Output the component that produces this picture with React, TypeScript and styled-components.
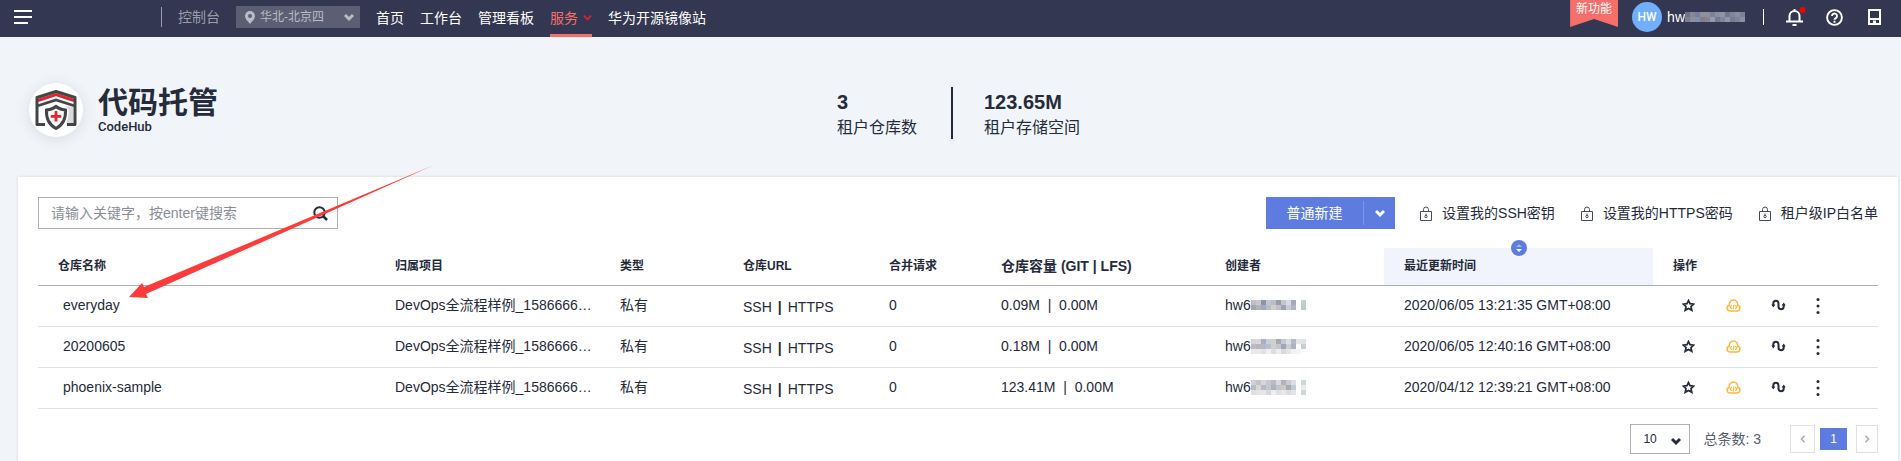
import React from "react";
import styled, { createGlobalStyle } from "styled-components";

const sans = `"Liberation Sans", "Noto Sans CJK SC", sans-serif`;

const Global = createGlobalStyle`
  *, *::before, *::after { box-sizing: border-box; }
  body { margin: 0; background: #f1f5f9; color: #252b3a; font: 14px/20px ${sans}; }
  button, input, select { font: inherit; color: inherit; margin: 0; padding: 0; border: 0; background: none; border-radius: 0; }
  a { color: inherit; text-decoration: none; }
  svg { display: block; flex: none; }
`;

const Page = styled.div`
  position: relative;
  min-height: 100vh;
  display: flex;
  flex-direction: column;
`;

/* top bar */
const TopBar = styled.header`
  height: 37px;
  flex: none;
  display: flex;
  align-items: stretch;
  background: #343751;
  color: #fff;
  padding: 0 20px 0 14px;
`;
const IconButton = styled.button`
  display: flex;
  align-items: center;
  padding-bottom: 3px;
`;
const Console = styled.div`
  display: flex;
  align-items: center;
  gap: 16px;
  margin-left: 129px;
  padding-bottom: 3px;
  color: #9b9dab;
`;
const Rule = styled.span<{ $h: number; $c: string; $w?: number }>`
  width: ${(p) => p.$w ?? 1}px;
  height: ${(p) => p.$h}px;
  background: ${(p) => p.$c};
`;
const Region = styled.button`
  width: 124px;
  height: 22px;
  display: flex;
  align-items: center;
  gap: 5px;
  padding: 0 6px 0 9px;
  background: #5c5f74;
  color: #b9bbc5;
  font-size: 12px;
  span { flex: 1; text-align: left; }
`;
const Nav = styled.nav`
  display: flex;
  gap: 16px;
  margin-left: 16px;
`;
const NavLink = styled.a<{ $active?: boolean }>`
  display: flex;
  align-items: center;
  gap: 5px;
  padding: ${(p) => (p.$active ? "1px 0 0" : "0 0 2px")};
  border-bottom: ${(p) => (p.$active ? "3px solid #f66f6a" : "0")};
  color: ${(p) => (p.$active ? "#f66f6a" : "#fff")};
`;
const Account = styled.div`
  margin-left: auto;
  display: flex;
  align-items: center;
  padding-bottom: 3px;
`;
const Ribbon = styled.a`
  align-self: flex-start;
  width: 48px;
  height: 27px;
  text-align: center;
  font-size: 12px;
  line-height: 18px;
  background: #f66f6a;
  clip-path: polygon(0 0, 100% 0, 100% 100%, 50% 19px, 0 100%);
`;
const Avatar = styled.span`
  width: 30px;
  height: 30px;
  margin: 0 5px 0 14px;
  border-radius: 50%;
  background: #71aefc;
  font: 500 12px/30px Roboto, sans-serif;
  text-align: center;
`;
const User = styled.span`
  display: flex;
  align-items: center;
  margin-right: 18px;
`;
const Tools = styled.div`
  display: flex;
  gap: 20px;
  margin-left: 22px;
  ${IconButton} { padding: 0; }
`;

/* service heading */
const Hero = styled.section`
  display: grid;
  grid-template-columns: 808px 1fr;
  height: 140px;
  padding: 50px 29px 0;
`;
const Brand = styled.div`
  display: flex;
  gap: 15px;
`;
const Logo = styled.span`
  display: grid;
  place-items: center;
  width: 54px;
  height: 54px;
  margin-top: -4px;
  border-radius: 50%;
  background: #fff;
  box-shadow: 0 2px 14px rgba(37, 43, 58, 0.12);
`;
const Title = styled.h1`
  margin: 0;
  font-size: 30px;
  line-height: 32px;
  font-weight: 700;
`;
const Subtitle = styled.div`
  font: 500 13px/16px Roboto, sans-serif;
`;
const Stats = styled.div`
  display: flex;
  align-items: flex-start;
  gap: 31px;
`;
const Stat = styled.div`
  padding-top: 3px;
  font-size: 16px;
  line-height: 28px;
  min-width: 83px;
  strong { display: block; font-size: 20px; line-height: 24px; }
`;

/* repository panel */
const Panel = styled.main`
  flex: 1;
  margin: 0 3px 0 18px;
  padding: 20px 20px 0;
  background: #fff;
  box-shadow: 0 0 3px rgba(37, 43, 58, 0.12);
`;
const Toolbar = styled.div`
  display: flex;
  align-items: center;
  height: 32px;
`;
const Search = styled.label`
  display: flex;
  align-items: center;
  width: 300px;
  height: 32px;
  padding: 0 9px 0 12px;
  border: 1px solid #adb0b8;
  input { flex: 1; min-width: 0; outline: 0; }
  input::placeholder { color: #8a8e99; opacity: 1; }
`;
const Split = styled.div`
  display: flex;
  align-items: center;
  width: 129px;
  height: 32px;
  margin-left: auto;
  background: #5e7ce0;
  color: #fff;
`;
const SplitMain = styled.button`
  flex: 1;
  height: 24px;
  border-right: 1px solid #7c95ea;
`;
const SplitMore = styled.button`
  display: grid;
  place-items: center;
  width: 31px;
  height: 32px;
`;
const Links = styled.div`
  display: flex;
  gap: 25px;
  margin-left: 24px;
`;
const LockLink = styled.a`
  display: flex;
  align-items: center;
  gap: 9px;
`;

const Table = styled.table`
  width: 100%;
  margin-top: 19px;
  table-layout: fixed;
  border-collapse: separate;
  border-spacing: 0;
`;
const Th = styled.th<{ $large?: boolean; $sorted?: boolean }>`
  position: relative;
  height: 38px;
  padding: 0 20px 2px;
  text-align: left;
  font-size: ${(p) => (p.$large ? 14 : 12)}px;
  font-weight: 700;
  white-space: nowrap;
  background: ${(p) => (p.$sorted ? "#f1f4fd" : "none")};
  border-bottom: 1px solid #adb0b8;
`;
const SortBadge = styled.button`
  position: absolute;
  top: -8px;
  left: calc(50% - 8px);
  width: 16px;
  height: 16px;
  border-radius: 50%;
  background: #5e7ce0;
  display: grid;
  place-items: center;
`;
const Td = styled.td<{ $name?: boolean; $low?: boolean }>`
  height: 41px;
  padding: ${(p) => (p.$low ? "2px 0 0" : "0 0 2px")};
  padding-left: ${(p) => (p.$name ? 25 : 20)}px;
  white-space: pre;
  border-bottom: 1px solid #dfe1e6;
`;
const Urls = styled.div`
  display: flex;
  gap: 6px;
`;
const Creator = styled.span`
  display: flex;
  align-items: center;
`;
const Actions = styled.div`
  display: flex;
  padding-left: 7px;
  gap: 29px;
  align-items: center;
`;
const Action = styled.button<{ $narrow?: boolean }>`
  display: grid;
  place-items: center;
  width: ${(p) => (p.$narrow ? 6 : 16)}px;
  height: 18px;
`;

const Pager = styled.footer`
  display: flex;
  align-items: center;
  justify-content: flex-end;
  margin-top: 15px;
  color: #575d6c;
`;
const SizeBox = styled.span`
  position: relative;
  display: flex;
  select {
    appearance: none;
    width: 60px;
    height: 30px;
    padding: 0 24px 0 12px;
    border: 1px solid #adb0b8;
    font-size: 12px;
    color: #252b3a;
  }
  svg { position: absolute; right: 9px; top: 12px; pointer-events: none; }
`;
const Total = styled.span`
  margin: 0 29px 0 13px;
`;
const PageButton = styled.button<{ $w: number; $current?: boolean }>`
  display: grid;
  place-items: center;
  width: ${(p) => p.$w}px;
  height: ${(p) => (p.$current ? 22 : 28)}px;
  border: ${(p) => (p.$current ? "0" : "1px solid #dfe1e6")};
  background: ${(p) => (p.$current ? "#5e7ce0" : "#fff")};
  color: #fff;
  font-size: 12px;
`;
const Pages = styled.div`
  display: flex;
  align-items: center;
  ${PageButton}:first-child { margin-right: 5px; }
  ${PageButton}:last-child { margin-left: 9px; }
`;
const Pointer = styled.svg`
  position: absolute;
  left: 129px;
  top: 164px;
  pointer-events: none;
`;

const Chevron = ({ c, dir = 0, w = 10, s = 2 }: { c: string; dir?: number; w?: number; s?: number }) => (
  <svg width={w} height={w} viewBox="0 0 10 10" fill="none" stroke={c} strokeWidth={s}>
    <path d="M1 3l4 4 4-4" transform={`rotate(${dir} 5 5)`} />
  </svg>
);

/* masked part of an account name, drawn as 5px tiles */
const Mosaic = ({ rows, h }: { rows: string[][]; h: number }) => (
  <svg width={rows[0].length * 5} height={h} shapeRendering="crispEdges" aria-hidden="true">
    {rows.map((r, y) => r.map((c, x) => <rect key={`${x}-${y}`} x={x * 5} y={y * 5} width="5" height="5" fill={c} />))}
  </svg>
);
const topMask = [
  ["#6d7189", "#85889c", "#77809b", "#8f8f9f", "#918f99", "#7c8199", "#8a8fa5", "#9194a4", "#74788e", "#81859b", "#8b8e9e", "#7a7f99"],
  ["#797e96", "#8e8d9e", "#868ea6", "#7e7d91", "#8b8189", "#939bae", "#74798f", "#858397", "#8e96ab", "#777b91", "#7f8399", "#8c90a5"],
];
const rowMasks = [
  [
    ["#c1bec5", "#c9cad0", "#8f93ab", "#c4c7d0", "#b9bdc8", "#9b9da3", "#c5c6cc", "#d8dce2", "#a6aabb", "#ffffff", "#c3cfd0"],
    ["#a5a8b4", "#b8b2b5", "#a4a9bb", "#b6bcc8", "#d2cecb", "#c1c2c9", "#9ca2b7", "#c9cdd1", "#b0b6c2", "#ffffff", "#bdcaca"],
  ],
  [
    ["#d7d5da", "#d9d6d8", "#a9adbf", "#cbced4", "#c9d0d6", "#aaa8ab", "#c2c5d2", "#dadce0", "#b5b8c4", "#e3e6ea", "#dfe4e5"],
    ["#b6bdc3", "#bdb6b5", "#b5b9c4", "#b5c0d0", "#d3cfc6", "#c5c7cd", "#a1a5b6", "#c9cfd3", "#adb2c0", "#ffffff", "#c5d0cf"],
    ["#ebe7e8", "#e8e9ee", "#e1e2e7", "#f1f0f3", "#dedfe3", "#eceef2", "#d7dbe1", "#eae4e5", "#f1f2f4", "#f4f7f8", "#ffffff"],
  ],
  [
    ["#d0d1d6", "#c3c4c6", "#dad6d7", "#c4c6d0", "#b5bdc2", "#dbd8da", "#b1b3b7", "#c7cbd3", "#dddee2", "#ffffff", "#ced9da"],
    ["#b9bbc5", "#d8d6d6", "#b6bac6", "#c9c7c9", "#adb2c0", "#c2c5cd", "#cfc9c6", "#a7abb5", "#c3cad0", "#ffffff", "#e8eeed"],
    ["#dcdfe4", "#e6e3e5", "#e7e7eb", "#d7d8df", "#efedef", "#dedfe3", "#eae7e8", "#dbdde2", "#e3e4e9", "#ffffff", "#cfd8d8"],
  ],
];

const LockIcon = () => (
  <svg width="14" height="15" viewBox="0 0 14 15" fill="none" stroke="#464c59">
    <path d="M1.5 5.5h11v9h-11zM4.500 5.500V3.500a2.500 2.500 0 0 1 5 0V5.500" />
    <circle cx="7" cy="10.500" r="1.200" />
    <path d="M7 7.500v2" />
  </svg>
);

const LogoIcon = () => (
  <svg width="42" height="42" viewBox="0 0 42 42" fill="none">
    <path d="M38 18v16h-7c2-4 3-8 2.500-14l-3-3z" fill="#d8dadb" />
    <path d="M3 11.500L21 5.500l18 6" stroke="#e8212f" strokeWidth="3" />
    <path d="M10 35.500H2V8.500l19-6 19 6v27h-8" stroke="#434547" strokeWidth="3" strokeLinejoin="round" />
    <path d="M2 17l19-6 19 6" stroke="#434547" strokeWidth="2.800" />
    <path d="M21 17.500c3 2.500 6 3 9.500 3.500C31 30 27.500 36 21 39.500 14.500 36 11 30 11.500 21c3.500-.5 6.500-1 9.500-3.500z" fill="#fff" stroke="#434547" strokeWidth="3" />
    <path d="M21 22v10.500M15.700 27.300h10.600" stroke="#e8212f" strokeWidth="2.800" />
  </svg>
);

const columns = [
  { label: "仓库名称", width: 337 },
  { label: "归属项目", width: 225 },
  { label: "类型", width: 123 },
  { label: "仓库URL", width: 146 },
  { label: "合并请求", width: 112 },
  { label: "仓库容量 (GIT | LFS)", width: 224, large: true },
  { label: "创建者", width: 179 },
  { label: "最近更新时间", width: 269, sorted: true },
  { label: "操作" },
];

const repos = [
  { name: "everyday", size: "0.09M  |  0.00M", time: "2020/06/05 13:21:35 GMT+08:00" },
  { name: "20200605", size: "0.18M  |  0.00M", time: "2020/06/05 12:40:16 GMT+08:00" },
  { name: "phoenix-sample", size: "123.41M  |  0.00M", time: "2020/04/12 12:39:21 GMT+08:00" },
];

const RowActions = () => (
  <Actions>
    <Action aria-label="收藏">
      <svg width="13" height="13" viewBox="0 0 13 13" fill="none" stroke="#252b3a" strokeWidth="1.700">
        <path d="M6.500 1.500l1.500 3.200 3.700.4-2.700 2.500.8 3.700-3.300-1.900-3.300 1.900.8-3.700L1.300 5.100l3.700-.4z" />
      </svg>
    </Action>
    <Action aria-label="云端">
      <svg width="15" height="13" viewBox="0 0 15 13" fill="none" stroke="#fdb73e" strokeWidth="1.500">
        <path d="M3.700 12a2.900 2.900 0 0 1-.4-5.700 4.300 4.300 0 1 1 8.400 0 2.900 2.900 0 0 1-.4 5.700z" />
        <path d="M5.700 6.200L4.200 8l1.500 1.800M9.300 6.200L10.800 8 9.300 9.800M8 5.700l-1 4.600" strokeWidth="1.200" />
      </svg>
    </Action>
    <Action aria-label="动态">
      <svg width="15" height="12" viewBox="0 0 15 12" fill="none" stroke="#252b3a" strokeWidth="2">
        <path d="M2.300 7V4.400a2.600 2.600 0 0 1 5.200 0v3.200a2.600 2.600 0 0 0 5.200 0V5" />
        <path d="M.3 5.500h4l-2 3zM10.700 6.500h4l-2-3z" fill="#252b3a" stroke="none" />
      </svg>
    </Action>
    <Action aria-label="更多" $narrow>
      <svg width="4" height="17" viewBox="0 0 4 17" fill="#252b3a">
        <circle cx="2" cy="2.500" r="1.500" />
        <circle cx="2" cy="9" r="1.500" />
        <circle cx="2" cy="15.500" r="1.500" />
      </svg>
    </Action>
  </Actions>
);

export default function App() {
  return (
    <Page>
      <Global />
      <TopBar>
        <IconButton aria-label="菜单">
          <svg width="18" height="14" fill="#fff">
            <path d="M0 0h18v2H0zM0 6h18v2H0zM0 12h14v2H0z" />
          </svg>
        </IconButton>
        <Console>
          <Rule $h={20} $c="#9a9ca9" />
          <a href="#console">控制台</a>
          <Region>
            <svg width="10" height="13" viewBox="0 0 10 13" fill="#b9bbc5">
              <path fillRule="evenodd" d="M5 0a5 5 0 0 1 5 5c0 3-3 5.500-5 8-2-2.500-5-5-5-8a5 5 0 0 1 5-5zm0 3a2 2 0 1 0 0 4 2 2 0 0 0 0-4z" />
            </svg>
            <span>华北-北京四</span>
            <Chevron c="#b9bbc5" s={3} />
          </Region>
        </Console>
        <Nav>
          <NavLink href="#home">首页</NavLink>
          <NavLink href="#work">工作台</NavLink>
          <NavLink href="#board">管理看板</NavLink>
          <NavLink href="#service" $active>
            服务
            <Chevron c="#e02033" w={9} />
          </NavLink>
          <NavLink href="#mirror">华为开源镜像站</NavLink>
        </Nav>
        <Account>
          <Ribbon href="#new">新功能</Ribbon>
          <Avatar>HW</Avatar>
          <User>
            hw
            <Mosaic rows={topMask} h={10} />
          </User>
          <Rule $h={16} $c="#fff" />
          <Tools>
            <IconButton aria-label="通知">
              <svg width="20" height="20" viewBox="0 0 20 20" fill="none" stroke="#fff" strokeWidth="2">
                <path d="M0 14.500h17M3.500 14.500V9a5 5 0 0 1 10 0v5.500M8.500 2v2M6.500 18h4" />
                <circle cx="16.500" cy="3" r="3" fill="#f5000f" stroke="none" />
              </svg>
            </IconButton>
            <IconButton aria-label="帮助">
              <svg width="17" height="17" viewBox="0 0 17 17" fill="none" stroke="#fff" strokeWidth="1.900">
                <circle cx="8.500" cy="8.500" r="7.400" />
                <path d="M6 7a2.500 2.500 0 1 1 4 2c-1 .6-1.500.8-1.500 1.800M8.500 11.800v2" />
              </svg>
            </IconButton>
            <IconButton aria-label="移动端">
              <svg width="18" height="16" viewBox="0 0 18 16" fill="none" stroke="#fff" strokeWidth="2">
                <path d="M6 1h11v14H6zM6 10h11" />
                <path d="M10 11.500h3V14h-3z" fill="#fff" stroke="none" />
              </svg>
            </IconButton>
          </Tools>
        </Account>
      </TopBar>

      <Hero>
        <Brand>
          <Logo>
            <LogoIcon />
          </Logo>
          <div>
            <Title>代码托管</Title>
            <Subtitle>CodeHub</Subtitle>
          </div>
        </Brand>
        <Stats>
          <Stat>
            <strong>3</strong>租户仓库数
          </Stat>
          <Rule $h={52} $w={2} $c="#252b3a" />
          <Stat>
            <strong>123.65M</strong>租户存储空间
          </Stat>
        </Stats>
      </Hero>

      <Panel>
        <Toolbar>
          <Search>
            <input placeholder="请输入关键字，按enter键搜索" aria-label="搜索仓库" />
            <svg width="15" height="15" viewBox="0 0 15 15" fill="none" stroke="#252b3a" strokeWidth="2">
              <circle cx="6.500" cy="6.500" r="5.200" />
              <path d="M10 10l4 4" strokeWidth="2.500" />
            </svg>
          </Search>
          <Split>
            <SplitMain>普通新建</SplitMain>
            <SplitMore aria-label="更多新建方式">
              <Chevron c="#fff" s={3} />
            </SplitMore>
          </Split>
          <Links>
            {["设置我的SSH密钥", "设置我的HTTPS密码", "租户级IP白名单"].map((t) => (
              <LockLink href="#setting" key={t}>
                <LockIcon />
                {t}
              </LockLink>
            ))}
          </Links>
        </Toolbar>

        <Table>
          <colgroup>
            {columns.map((c) => (
              <col key={c.label} width={c.width} />
            ))}
          </colgroup>
          <thead>
            <tr>
              {columns.map((c) => (
                <Th key={c.label} $large={c.large} $sorted={c.sorted}>
                  {c.label}
                  {c.sorted && (
                    <SortBadge aria-label="排序">
                      <svg width="6" height="10" viewBox="0 0 6 10">
                        <path d="M0 4h6L3 1z" fill="#a3b5f0" />
                        <path d="M0 6h6L3 9z" fill="#fff" />
                      </svg>
                    </SortBadge>
                  )}
                </Th>
              ))}
            </tr>
          </thead>
          <tbody>
            {repos.map((r, i) => (
              <tr key={r.name}>
                <Td $name>
                  <a href="#repo">{r.name}</a>
                </Td>
                <Td>DevOps全流程样例_1586666…</Td>
                <Td>私有</Td>
                <Td $low>
                  <Urls>
                    <a href="#ssh">SSH</a>
                    <b>|</b>
                    <a href="#https">HTTPS</a>
                  </Urls>
                </Td>
                <Td>0</Td>
                <Td>{r.size}</Td>
                <Td>
                  <Creator>
                    hw6
                    <Mosaic rows={rowMasks[i]} h={rowMasks[i].length * 5} />
                  </Creator>
                </Td>
                <Td>{r.time}</Td>
                <Td>
                  <RowActions />
                </Td>
              </tr>
            ))}
          </tbody>
        </Table>

        <Pager>
          <SizeBox>
            <select aria-label="每页条数" defaultValue="10">
              <option>10</option>
              <option>20</option>
            </select>
            <Chevron c="#252b3a" s={3} />
          </SizeBox>
          <Total>总条数: 3</Total>
          <Pages>
            <PageButton $w={25} aria-label="上一页">
              <Chevron c="#adb0b8" dir={90} w={8} />
            </PageButton>
            <PageButton $w={27} $current>
              1
            </PageButton>
            <PageButton $w={22} aria-label="下一页">
              <Chevron c="#adb0b8" dir={-90} w={8} />
            </PageButton>
          </Pages>
        </Pager>
      </Panel>

      <Pointer width="306" height="136" viewBox="0 0 306 136" fill="#fc3b3a" aria-hidden="true">
        <path d="M0 133L13 119l2 4L305 1 17 130l2 4z" />
      </Pointer>
    </Page>
  );
}
